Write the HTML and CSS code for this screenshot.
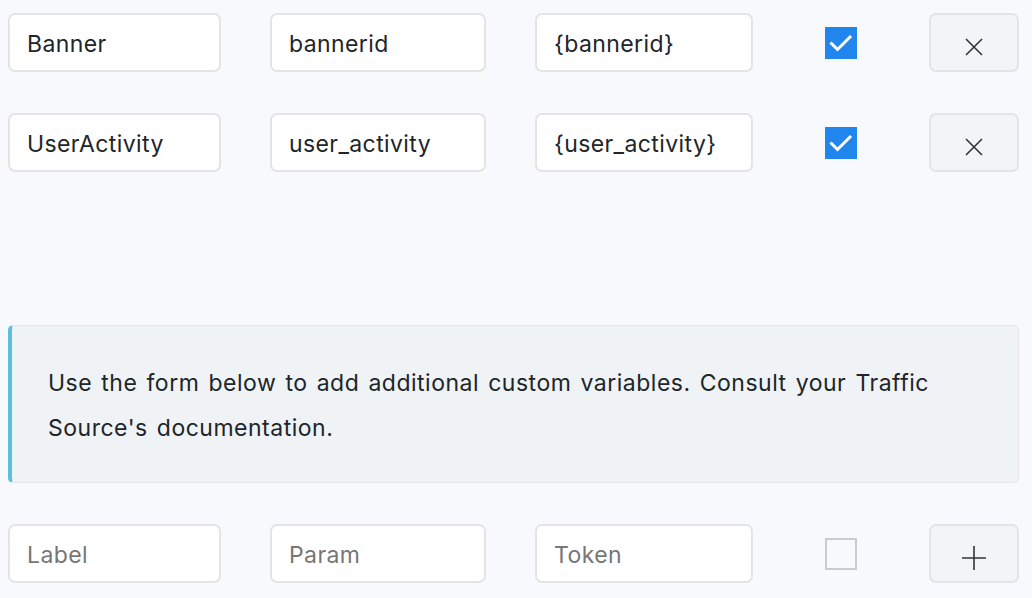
FILE: index.html
```html
<!DOCTYPE html>
<html>
<head>
<meta charset="utf-8">
<link rel="stylesheet" href="styles.css">
</head>
<body>
<div class="page">
  <div class="row">
    <input class="field" type="text" value="Banner">
    <input class="field" type="text" value="bannerid">
    <input class="field" type="text" value="{bannerid}">
    <div class="check-cell"><span class="check checked"><svg viewBox="0 0 32 32" width="32" height="32"><path d="M6.5 16.5 L12.5 22.5 L25 10" fill="none" stroke="#fff" stroke-width="3" stroke-linecap="square"/></svg></span></div>
    <button class="btn"><svg viewBox="0 0 20 20" width="20" height="20"><path d="M2 2 L18 18 M18 2 L2 18" stroke="#333" stroke-width="1.6" fill="none"/></svg></button>
  </div>
  <div class="row">
    <input class="field" type="text" value="UserActivity">
    <input class="field" type="text" value="user_activity">
    <input class="field" type="text" value="{user_activity}">
    <div class="check-cell"><span class="check checked"><svg viewBox="0 0 32 32" width="32" height="32"><path d="M6.5 16.5 L12.5 22.5 L25 10" fill="none" stroke="#fff" stroke-width="3" stroke-linecap="square"/></svg></span></div>
    <button class="btn"><svg viewBox="0 0 20 20" width="20" height="20"><path d="M2 2 L18 18 M18 2 L2 18" stroke="#333" stroke-width="1.6" fill="none"/></svg></button>
  </div>
  <div class="alert">Use the form below to add additional custom variables. Consult your Traffic Source's documentation.</div>
  <div class="row">
    <input class="field" type="text" placeholder="Label">
    <input class="field" type="text" placeholder="Param">
    <input class="field" type="text" placeholder="Token">
    <div class="check-cell"><span class="check"></span></div>
    <button class="btn"><svg viewBox="0 0 26 26" width="26" height="26"><path d="M1 13 H25 M13 1 V25" stroke="#333" stroke-width="1.6" fill="none"/></svg></button>
  </div>
</div>
</body>
</html>
```

FILE: styles.css
```css
html, body {
  margin: 0;
  padding: 0;
  background: #f8f9fc;
}
body {
  font-family: Inter, "Noto Sans", sans-serif;
  color: #212529;
}
.page {
  padding: 13px 13px 0 8px;
  display: flex;
  flex-direction: column;
}
.row {
  display: grid;
  grid-template-columns: 213px 216px 218px 1fr 90px;
  column-gap: 49px;
  height: 59px;
  margin-bottom: 41px;
}
.field {
  box-sizing: border-box;
  height: 59px;
  border: 2px solid #e4e4e6;
  border-radius: 7px;
  background: #fff;
  padding: 2px 17px 0 17px;
  font-family: inherit;
  font-size: 23px;
  letter-spacing: 0.4px;
  color: #212529;
  outline: none;
  width: 100%;
}
.field::placeholder {
  color: #767676;
}
.check-cell {
  display: flex;
  align-items: center;
  justify-content: center;
}
.check {
  box-sizing: border-box;
  width: 32px;
  height: 32px;
  border: 2px solid #cbcbcb;
  display: block;
}
.check.checked {
  background: #2185ee;
  border: none;
}
.check svg {
  display: block;
}
.btn {
  box-sizing: border-box;
  height: 59px;
  border: 2px solid #e4e4e6;
  border-radius: 7px;
  background: #f3f4f6;
  display: flex;
  align-items: center;
  justify-content: center;
  padding: 8px 0 0 0;
}
.btn svg {
  display: block;
}
.alert {
  margin-top: 112px;
  margin-bottom: 41px;
  box-sizing: border-box;
  background: #eff3f6;
  border: 1px solid #e5e7e9;
  border-left: 4px solid #5bc0de;
  border-radius: 5px;
  padding: 35px 60px 31px 36px;
  font-size: 23px;
  letter-spacing: 0.5px;
  word-spacing: 2.2px;
  line-height: 45px;
}
```
